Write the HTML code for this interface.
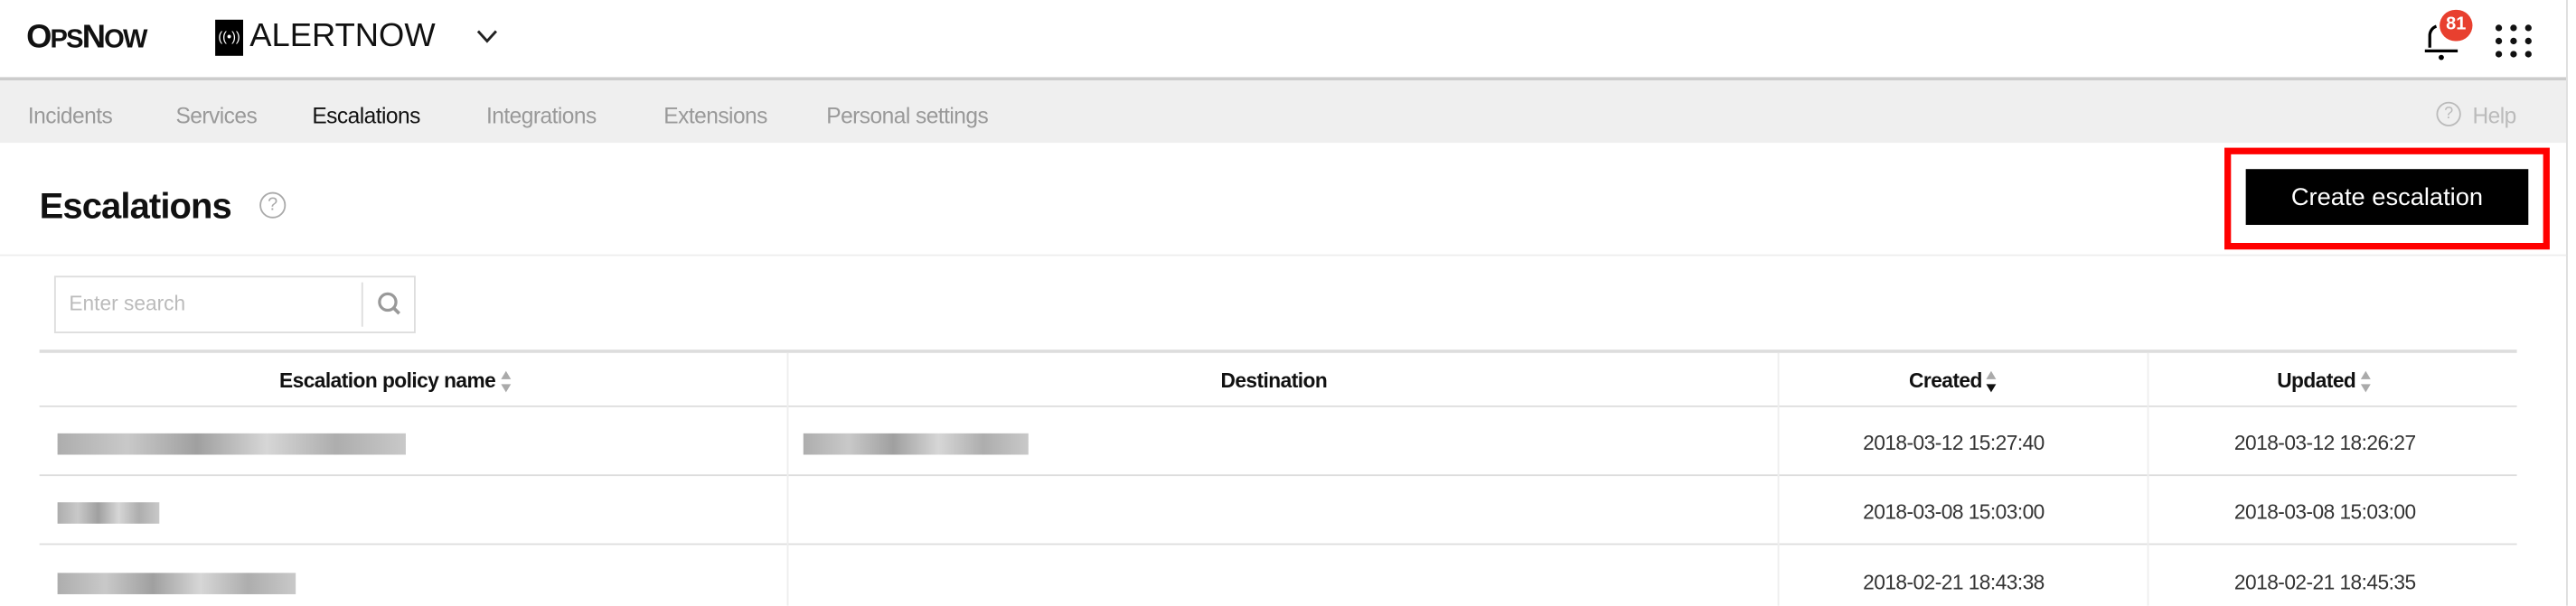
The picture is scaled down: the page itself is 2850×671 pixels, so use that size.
<!DOCTYPE html>
<html><head><meta charset="utf-8"><style>
html,body{margin:0;padding:0;background:#fff;width:2850px;height:670px;overflow:hidden}
#w{position:absolute;left:0;top:0;width:1568px;height:369px;transform:scale(1.8176);transform-origin:0 0;font-family:"Liberation Sans",sans-serif;}
.a{position:absolute;white-space:nowrap}
.nav{font-size:13.5px;color:#999;top:63px;letter-spacing:-0.3px}
.th{font-size:12.5px;font-weight:bold;color:#111;top:225px;letter-spacing:-0.3px}
.td{font-size:12.5px;color:#333;letter-spacing:-0.3px}
.bl{position:absolute;height:13px;background:linear-gradient(90deg,#999,#bbb 20%,#888 40%,#ccc 60%,#999 80%,#bbb);opacity:.8}
.sort{display:inline-block;vertical-align:middle;margin-left:3px;width:7px;height:13px;position:relative}
.sort:before{content:"";position:absolute;top:0;left:0;border:3.5px solid transparent;border-bottom:5px solid #aaa;border-top:0}
.sort:after{content:"";position:absolute;bottom:0;left:0;border:3.5px solid transparent;border-top:5px solid #aaa;border-bottom:0}
.sort.d:after{border-top-color:#111}
</style></head><body><div id="w">
<div class="a" style="left:16px;top:12px;font-size:20px;font-weight:bold;color:#111;letter-spacing:-1px">O<span style="font-size:16px">PS</span>N<span style="font-size:16px">OW</span></div>
<div class="a" style="left:131px;top:12px;width:17px;height:22px;background:#000;color:#fff;font-size:8px;line-height:22px;text-align:center">((•))</div>
<div class="a" style="left:152px;top:11px;font-size:20px;color:#111">ALERTNOW</div>
<svg class="a" style="left:290px;top:18px" width="13" height="9"><path d="M1 1 L6.5 7 L12 1" stroke="#222" stroke-width="1.6" fill="none"/></svg>
<div class="a" style="left:0;top:47px;width:1562px;height:2px;background:#ccc"></div>
<div class="a" style="left:0;top:49px;width:1562px;height:38px;background:#efefef"></div>
<div class="a" style="left:1562px;top:0;width:1px;height:369px;background:#ddd"></div>
<svg class="a" style="left:1474px;top:12px" width="26" height="26"><path d="M5 17 V10 a6 6 0 0 1 4 -6" stroke="#000" stroke-width="1.8" fill="none"/><path d="M2 19 H22" stroke="#000" stroke-width="1.8"/><circle cx="12" cy="23" r="1.6"/></svg>
<div class="a" style="left:1485px;top:6px;width:20px;height:19px;border-radius:10px;background:#e8402f;color:#fff;font-size:11px;font-weight:bold;text-align:center;line-height:19px">81</div>
<svg class="a" style="left:1518px;top:14px" width="24" height="22"><g fill="#111"><circle cx="3" cy="3" r="2"/><circle cx="12" cy="3" r="2"/><circle cx="21" cy="3" r="2"/><circle cx="3" cy="11" r="2"/><circle cx="12" cy="11" r="2"/><circle cx="21" cy="11" r="2"/><circle cx="3" cy="19" r="2"/><circle cx="12" cy="19" r="2"/><circle cx="21" cy="19" r="2"/></g></svg>
<div class="a nav" style="left:17px">Incidents</div>
<div class="a nav" style="left:107px">Services</div>
<div class="a nav" style="left:190px;color:#111">Escalations</div>
<div class="a nav" style="left:296px">Integrations</div>
<div class="a nav" style="left:404px">Extensions</div>
<div class="a nav" style="left:503px">Personal settings</div>
<div class="a" style="left:1483px;top:62px;width:13px;height:13px;border:1.5px solid #bbb;border-radius:50%;font-size:10px;color:#bbb;text-align:center;line-height:13px">?</div>
<div class="a nav" style="left:1505px;color:#bbb">Help</div>
<div class="a" style="left:24px;top:113px;font-size:22px;font-weight:bold;color:#111;letter-spacing:-0.5px">Escalations</div>
<div class="a" style="left:158px;top:117px;width:14px;height:14px;border:1.5px solid #aaa;border-radius:50%;font-size:11px;color:#aaa;text-align:center;line-height:14px">?</div>
<div class="a" style="left:0;top:155px;width:1562px;height:1px;background:#eee"></div>
<div class="a" style="left:1354px;top:90px;width:190px;height:54px;border:4px solid #f00"></div>
<div class="a" style="left:1367px;top:103px;width:172px;height:34px;background:#000;color:#fff;font-size:15px;text-align:center;line-height:35px">Create escalation</div>
<div class="a" style="left:33px;top:168px;width:218px;height:33px;border:1px solid #ddd"></div>
<div class="a" style="left:42px;top:178px;font-size:12.5px;color:#bbb">Enter search</div>
<div class="a" style="left:220px;top:172px;width:1px;height:27px;background:#ddd"></div>
<svg class="a" style="left:229px;top:177px" width="16" height="16"><circle cx="7" cy="7" r="5" stroke="#999" stroke-width="1.8" fill="none"/><path d="M10.5 10.5 L14 14" stroke="#999" stroke-width="2"/></svg>
<div class="a" style="left:24px;top:213px;width:1508px;height:2px;background:#ddd"></div>
<div class="a" style="left:24px;top:247px;width:1508px;height:1px;background:#ddd"></div>
<div class="a" style="left:24px;top:289px;width:1508px;height:1px;background:#ddd"></div>
<div class="a" style="left:24px;top:331px;width:1508px;height:1px;background:#ddd"></div>
<div class="a" style="left:479px;top:215px;width:1px;height:154px;background:#eee"></div>
<div class="a" style="left:1082px;top:215px;width:1px;height:154px;background:#eee"></div>
<div class="a" style="left:1307px;top:215px;width:1px;height:154px;background:#eee"></div>
<div class="a th" style="left:170px">Escalation policy name<span class="sort"></span></div>
<div class="a th" style="left:743px">Destination</div>
<div class="a th" style="left:1162px">Created<span class="sort d"></span></div>
<div class="a th" style="left:1386px">Updated<span class="sort"></span></div>
<div class="bl" style="left:35px;top:264px;width:212px"></div>
<div class="bl" style="left:489px;top:264px;width:137px"></div>
<div class="bl" style="left:35px;top:306px;width:62px"></div>
<div class="bl" style="left:35px;top:349px;width:145px"></div>
<div class="a td" style="left:1134px;top:263px">2018-03-12 15:27:40</div>
<div class="a td" style="left:1360px;top:263px">2018-03-12 18:26:27</div>
<div class="a td" style="left:1134px;top:305px">2018-03-08 15:03:00</div>
<div class="a td" style="left:1360px;top:305px">2018-03-08 15:03:00</div>
<div class="a td" style="left:1134px;top:348px">2018-02-21 18:43:38</div>
<div class="a td" style="left:1360px;top:348px">2018-02-21 18:45:35</div>
</div></body></html>
